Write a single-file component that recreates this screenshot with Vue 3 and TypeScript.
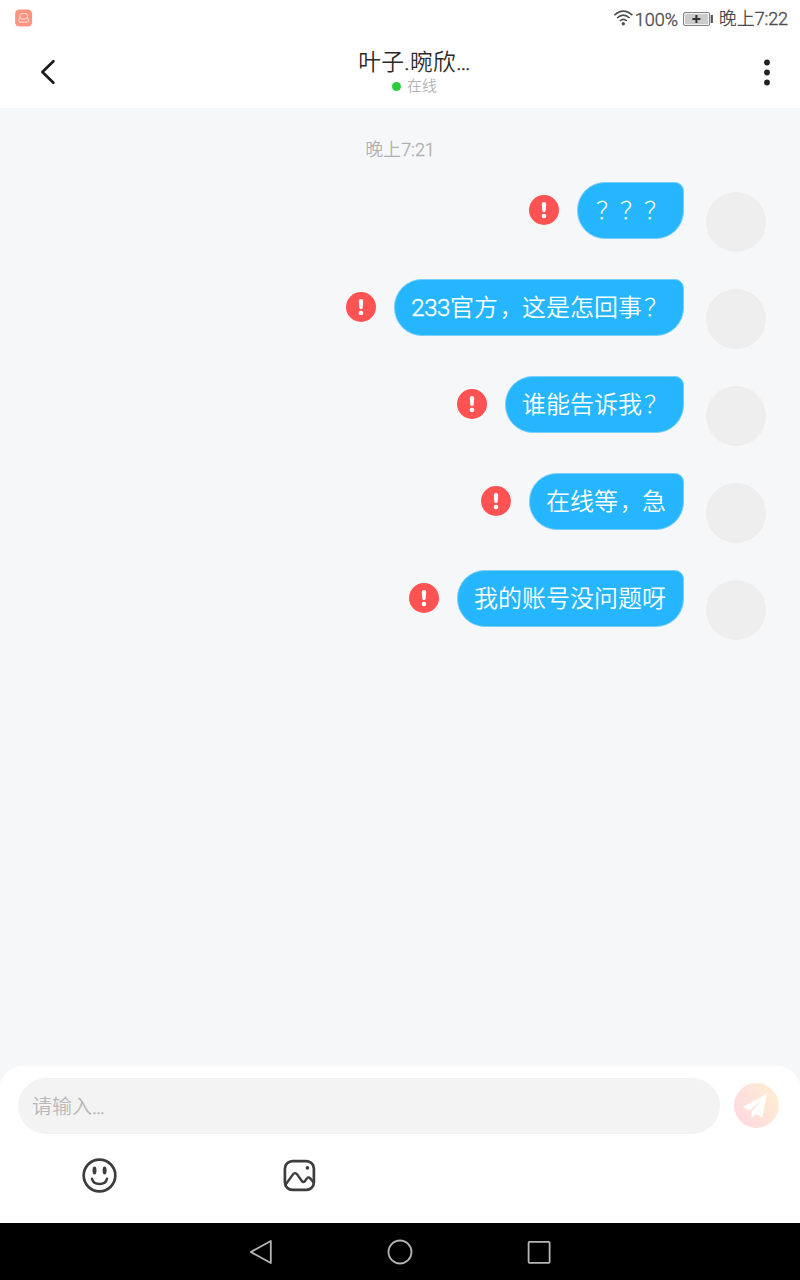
<script setup lang="ts">
interface Message {
  id: number
  text: string
}

const messages: Message[] = [
  { id: 1, text: '？？？' },
  { id: 2, text: '233官方，这是怎回事？' },
  { id: 3, text: '谁能告诉我？' },
  { id: 4, text: '在线等，急' },
  { id: 5, text: '我的账号没问题呀' },
]

const kinds: Record<string, string> = { '，': 'comma', '？': 'question', '233': 'latin digits' }

function split(text: string) {
  return text
    .split(/([，？]|\d+)/)
    .filter(Boolean)
    .map((part) => ({ part, kind: kinds[part] ?? 'han' }))
}
</script>

<template>
  <div class="screen">
    <div class="status-bar">
      <svg class="app-badge" width="18" height="18" viewBox="0 0 18 18" fill="none">
        <rect x="0.1" y="0.5" width="17" height="17" rx="4.2" fill="#ff9482" />
        <path d="M6 4.6h5.4q1.8 1.7 1 3.4-.9 2.2-2.3 2.2H7.2Q5.700 10.200 4.900 8q-.6-1.800 1.100-3.400z M4.600 8.600 3.900 11.200q-.5 1.900 1 1.900h7.600q1.500 0 1-1.900l-.8-2.600" stroke="#ffdcd5" stroke-width="1" stroke-linejoin="round" />
      </svg>
      <div class="status-right">
        <svg class="wifi" width="20" height="18" viewBox="0 0 20 18" fill="none" stroke="#505050" stroke-width="1.6">
          <path d="M.4 6.2Q9.3-2 18.4 6.2M3.1 9Q9.3 3.2 15.6 9M5.9 11.9Q9.3 8.8 12.8 11.9" />
          <circle cx="9.3" cy="14.8" r="1.7" fill="#505050" stroke="none" />
        </svg>
        <span class="percent latin">100%</span>
        <svg class="battery" width="31" height="14" viewBox="0 0 31 14" fill="none">
          <rect x="0.6" y="0.6" width="26" height="12.8" rx="1.4" fill="#fff" stroke="#777" />
          <rect x="2" y="2" width="23.2" height="10" fill="#cbcbcb" />
          <path d="M9.4 7h8M13.4 3v8" stroke="#333" stroke-width="2" />
          <path d="M28.8 3v8" stroke="#555" stroke-width="2.2" />
        </svg>
        <span class="clock">晚上<span class="latin">7:22</span></span>
      </div>
    </div>

    <header class="header">
      <svg class="back" width="18" height="26" viewBox="0 0 18 26" fill="none">
        <path d="M14.4 2.2 3.4 13l11 10.800" stroke="#1c1c1e" stroke-width="2.7" stroke-linecap="round" stroke-linejoin="round" />
      </svg>
      <div class="peer">
        <div class="name">叶子<span class="latin">.</span>晼欣<span class="latin">…</span></div>
        <div class="presence"><i class="online-dot"></i><span>在线</span></div>
      </div>
      <svg class="more" width="8" height="28" viewBox="0 0 8 28" fill="#222">
        <circle cx="4" cy="4.5" r="2.9" /><circle cx="4" cy="14.5" r="2.9" /><circle cx="4" cy="24.5" r="2.9" />
      </svg>
    </header>

    <main class="chat">
      <div class="timestamp">晚上<span class="latin">7:21</span></div>
      <div v-for="m in messages" :key="m.id" class="row">
        <svg class="failed" width="30" height="30" viewBox="0 0 30 30">
          <circle cx="15" cy="15" r="15" fill="#ff5353" />
          <path d="M12.8 9.2a2.2 2.2 0 0 1 4.4 0l-.5 6.2a1.7 1.7 0 0 1-3.4 0z" fill="#fff" />
          <circle cx="15" cy="21" r="2.3" fill="#fff" />
        </svg>
        <div class="bubble"><span v-for="(p, i) in split(m.text)" :key="i" :class="p.kind">{{ p.part }}</span></div>
        <div class="avatar"></div>
      </div>
    </main>

    <footer class="composer">
      <div class="input-line">
        <div class="input">请输入<span class="latin">…</span></div>
        <svg class="send" width="46" height="46" viewBox="0 0 46 46">
          <defs>
            <linearGradient id="send-fill" x1="0.1" y1="0.75" x2="0.9" y2="0.25">
              <stop offset="0" stop-color="#ffdae0" />
              <stop offset="1" stop-color="#ffebd3" />
            </linearGradient>
          </defs>
          <circle cx="22.4" cy="22.5" r="22.4" fill="url(#send-fill)" />
          <path d="M33 10.8 9.400 23.4q-.7.5 0 .9l6.1 3.2L28 17 17.6 28.6v5.3q.2.8.8.3l3.3-3.5 5.6 3q.9.4 1.2-.6z" fill="#fff" />
        </svg>
      </div>
      <div class="tools">
        <svg class="smile" width="36" height="36" viewBox="0 0 36 36" fill="none" stroke="#3d3d3d">
          <circle cx="17.5" cy="17.5" r="15.8" stroke-width="2.7" />
          <path d="M10 20.8c1.6 7 13.4 7 15 0" stroke-width="2.5" stroke-linecap="round" />
          <g fill="#3d3d3d" stroke="none"><ellipse cx="12.5" cy="12.6" rx="2" ry="4" /><ellipse cx="22.6" cy="12.6" rx="2" ry="4" /></g>
        </svg>
        <svg class="photo" width="34" height="34" viewBox="0 0 34 34" fill="none" stroke="#3d3d3d" stroke-width="2.7">
          <rect x="1.9" y="3.1" width="29" height="28.8" rx="7.6" />
          <path d="M2.5 26.8 9.8 16.6q2.2-2.9 4.5 0l4.9 6.8q1.2 1.4 2.5 0l2.2-3q1.6-2 3.3 0l3.4 4" stroke-width="2.4" />
          <circle cx="24.4" cy="9.9" r="1.8" fill="#3d3d3d" stroke="none" />
        </svg>
      </div>
    </footer>

    <nav class="nav">
      <svg width="26" height="28" viewBox="0 0 26 28"><path d="M22.8 3v22L2.8 14z" /></svg>
      <svg width="28" height="28" viewBox="0 0 28 28"><circle cx="14" cy="14" r="11.5" /></svg>
      <svg width="26" height="28" viewBox="0 0 26 28"><rect x="2.6" y="3.8" width="21" height="21" rx="0.8" /></svg>
    </nav>
  </div>
</template>

<style>
body {
  margin: 0;
}
</style>

<style scoped>
.screen {
  width: 800px;
  height: 1280px;
  display: flex;
  flex-direction: column;
  overflow: hidden;
  background: #f6f7f9;
  font-family: Roboto, "Noto Sans CJK SC", sans-serif;
  font-weight: 350;
}
.screen svg {
  display: block;
  flex: none;
}
.latin {
  -webkit-text-stroke: 0.4px currentColor;
}
.status-bar {
  height: 36px;
  flex: none;
  display: flex;
  justify-content: space-between;
  align-items: center;
  padding: 0 12px 0 15px;
  background: #fff;
  font-size: 18px;
  line-height: 26px;
  color: #4c4c4c;
}
.status-right {
  display: flex;
  align-items: center;
  white-space: nowrap;
}
.percent {
  width: 43px;
  margin: 3px 5px 0 1px;
}
.battery {
  margin: 2px 5px 0 0;
}
.clock {
  margin-top: 2px;
  letter-spacing: -0.1px;
}
.header {
  height: 72px;
  flex: none;
  display: flex;
  justify-content: space-between;
  align-items: center;
  padding: 0 29px 0 39px;
  background: #fff;
}
.peer {
  margin-left: 9px;
  text-align: center;
}
.name {
  font-size: 22.7px;
  line-height: 30px;
  letter-spacing: 0.3px;
  color: #2a2a2a;
}
.presence {
  display: flex;
  justify-content: center;
  align-items: center;
  gap: 6px;
  margin-top: -1px;
  padding-bottom: 1px;
  font-size: 15px;
  line-height: 19px;
  color: #b4b4b4;
}
.online-dot {
  width: 9px;
  height: 9px;
  border-radius: 50%;
  background: #2dcc3c;
}
.chat {
  flex: 1;
}
.timestamp {
  padding: 28px 0 19px;
  height: 27px;
  line-height: 27px;
  text-align: center;
  font-size: 18px;
  color: #b0b0b0;
}
.row {
  height: 97px;
  display: flex;
  justify-content: flex-end;
  align-items: flex-start;
  padding-right: 34px;
}
.failed {
  margin: 13px 18px 0 0;
}
.bubble {
  box-sizing: border-box;
  height: 57px;
  padding: 0 17px 0 16px;
  border: 1px solid #7bd0fb;
  border-radius: 28px 9px 28px 28px;
  background: #26b6ff;
  color: #fff;
  font-size: 24px;
  line-height: 56px;
  white-space: nowrap;
}
.digits {
  letter-spacing: -0.4px;
}
.comma {
  padding-left: 2px;
  font-size: 22px;
}
.question {
  margin: 0 -2px 0 2px;
  font-weight: 300;
}
.avatar {
  width: 60px;
  height: 60px;
  margin: 10px 0 0 22px;
  border-radius: 50%;
  background: #eee;
}
.composer {
  height: 157px;
  flex: none;
  box-sizing: border-box;
  padding: 12px 20px 0 18px;
  border-radius: 22px 22px 0 0;
  background: #fff;
}
.input-line {
  display: flex;
  align-items: center;
  gap: 14px;
}
.input {
  flex: 1;
  height: 56px;
  padding-left: 14px;
  border-radius: 28px;
  background: #f3f3f3;
  color: #b8b8b8;
  font-size: 20px;
  line-height: 58px;
}
.tools {
  display: flex;
  gap: 165px;
  padding: 24px 0 0 64px;
}
.nav {
  height: 57px;
  flex: none;
  display: flex;
  align-items: center;
  justify-content: center;
  gap: 112px;
  background: #000;
  fill: none;
  stroke: #b5b5b5;
  stroke-width: 1.8;
  stroke-linejoin: round;
}
</style>
